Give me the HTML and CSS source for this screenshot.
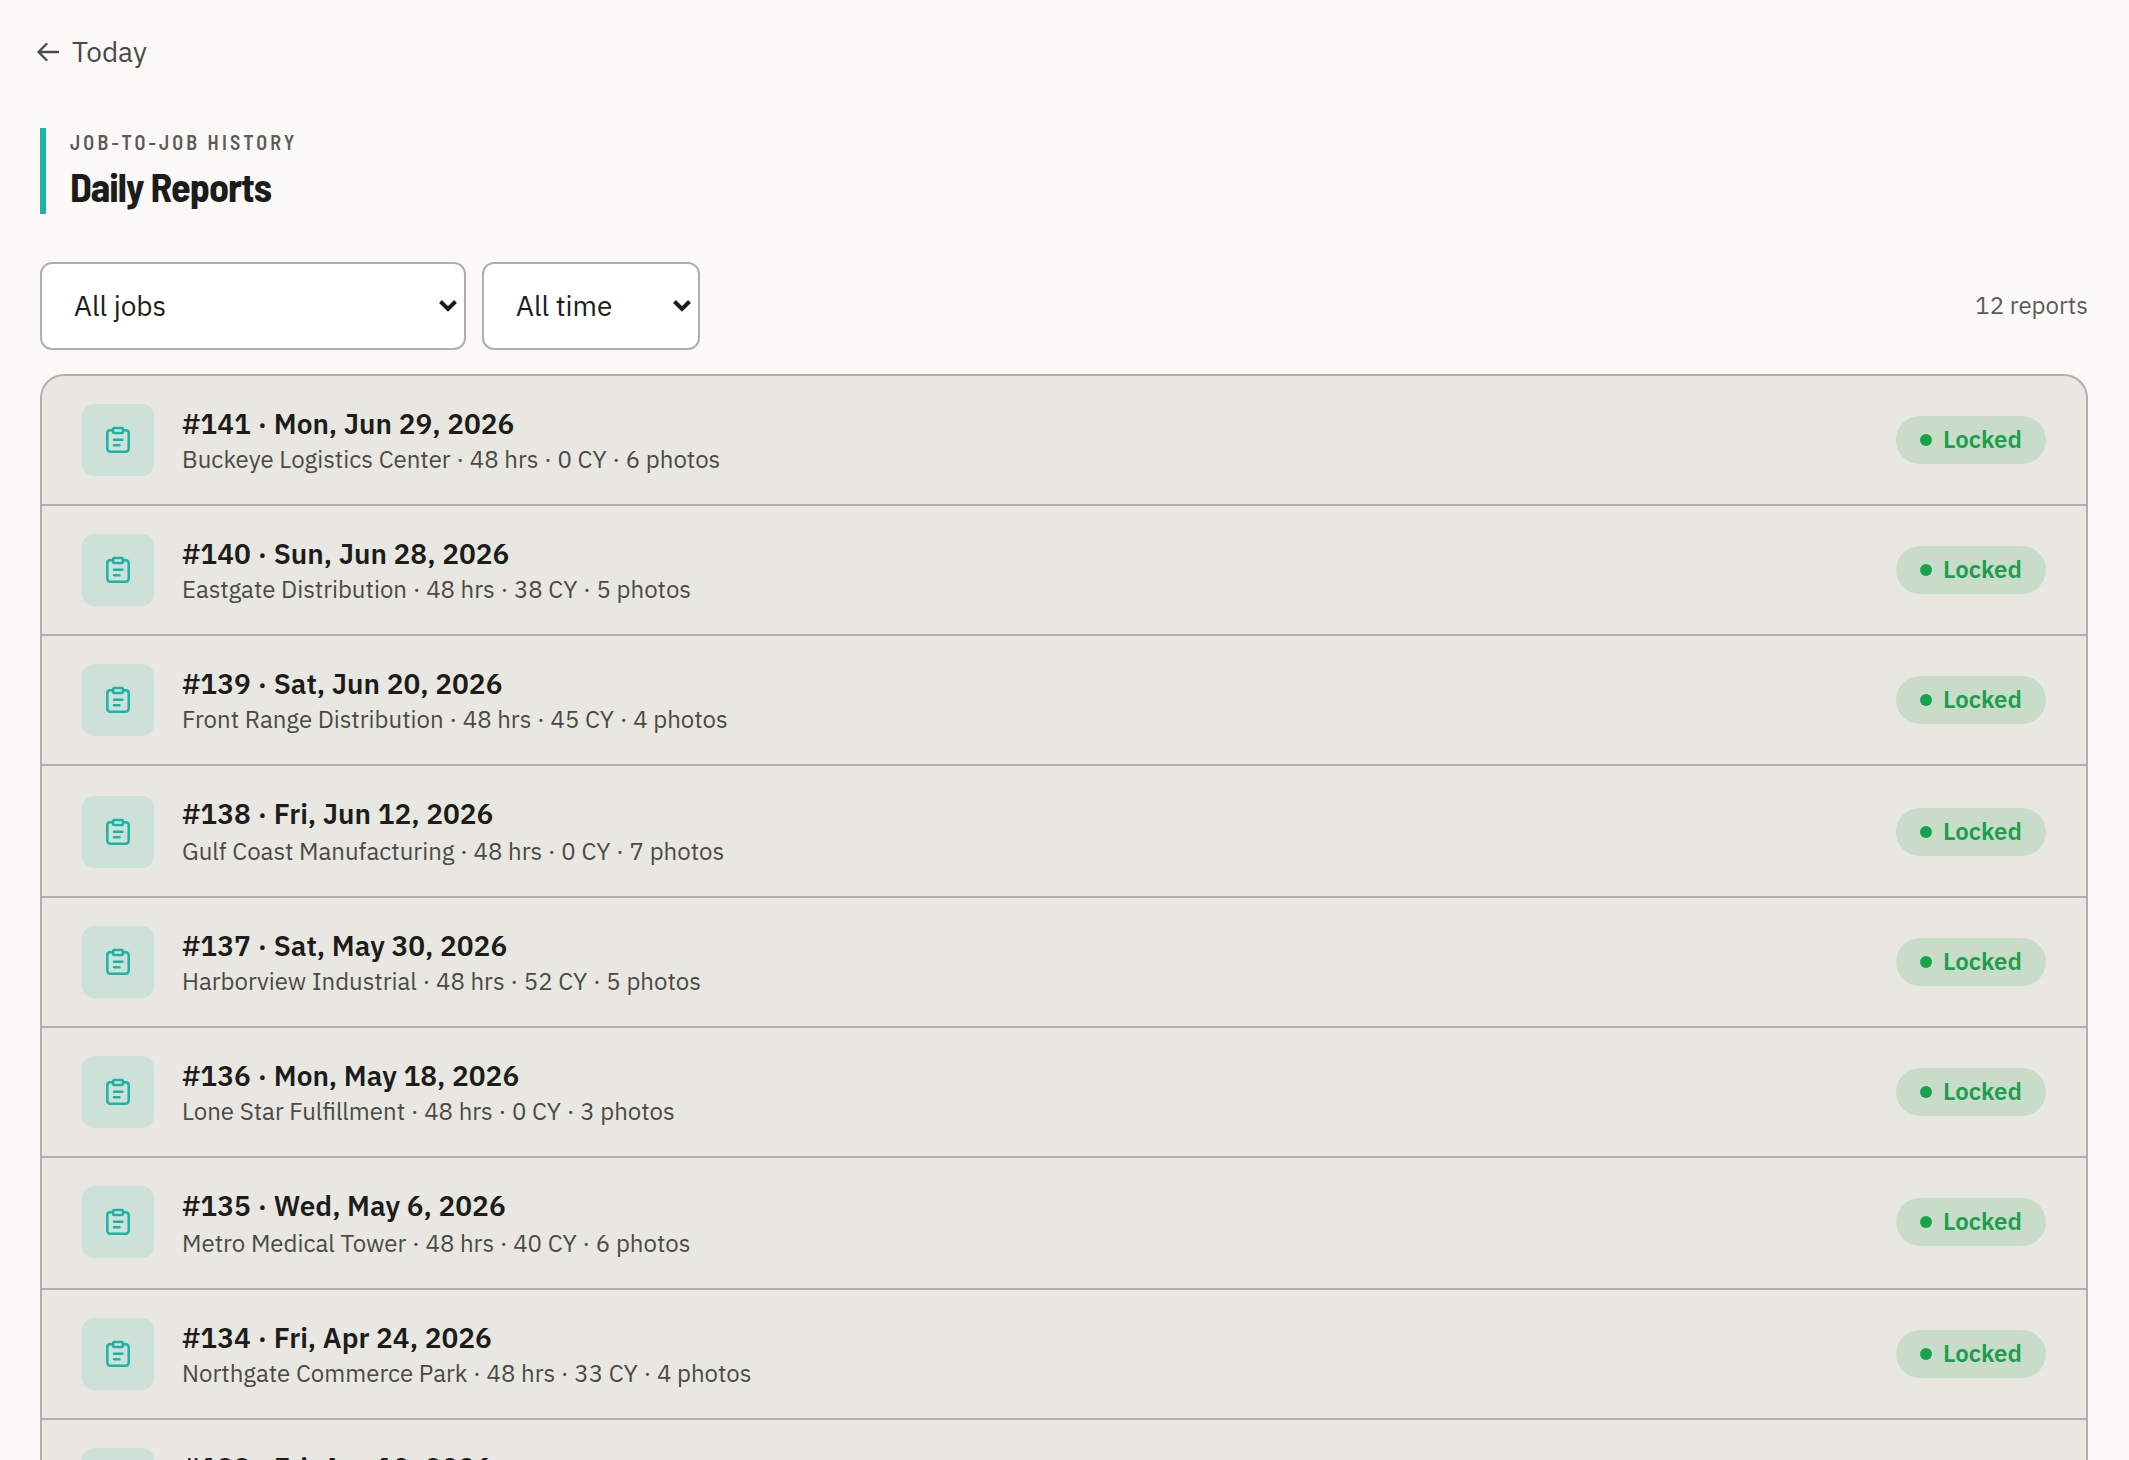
FILE: index.html
```html
<!DOCTYPE html>
<html lang="en">
<head>
<meta charset="utf-8">
<title>Daily Reports</title>
<link rel="stylesheet" href="styles.css">
</head>
<body>
<svg class="sprite" aria-hidden="true">
  <symbol id="clip" viewBox="0 0 28 28"><g fill="none" stroke="currentColor" stroke-width="2.5" stroke-linecap="round" stroke-linejoin="round"><path d="M9 4.2H6.200A2.900 2.900 0 0 0 3.300 7v15.800A2.900 2.900 0 0 0 6.200 25.700h15.600a2.900 2.900 0 0 0 2.900-2.900V7A2.900 2.900 0 0 0 21.800 4.200H19"/><rect x="9" y="1.900" width="10" height="5" rx="1.500"/><path d="M10 13.800h8.500M10 19.300h5.500"/></g></symbol>
</svg>
<a class="back"><svg viewBox="0 0 28 28"><path d="M24 14H4.500M12.500 6 4.500 14l8 8" fill="none" stroke="currentColor" stroke-width="2.400" stroke-linecap="round" stroke-linejoin="round"/></svg><span>Today</span></a>
<header class="heading"><p class="eyebrow">JOB-TO-JOB HISTORY</p><h1>Daily Reports</h1></header>
<div class="filters">
  <div class="select jobs"><span>All jobs</span><svg viewBox="0 0 18 12"><path d="M1.500 1.500 9 9l7.500-7.500"/></svg></div>
  <div class="select time"><span>All time</span><svg viewBox="0 0 18 12"><path d="M1.500 1.500 9 9l7.500-7.500"/></svg></div>
  <span class="count">12 reports</span>
</div>
<main class="list" id="list"></main>
<script src="script.js"></script>
</body>
</html>
```
FILE: styles.css
```css
* { box-sizing: border-box; }
html { overflow: hidden; }
body { display: flex; flex-direction: column; margin: 0; height: 1460px; overflow: hidden; background: #faf9f7; color: #1c1c1a; font-family: "IBM Plex Sans", Roboto, "Noto Sans", sans-serif; font-size: 28px; }
.sprite { display: none; }
.back { display: flex; flex: none; align-items: center; gap: 10px; height: 40px; margin: 32px 0 0 34px; color: #4a4a46; }
.back svg { width: 28px; height: 28px; }
.back span { padding-bottom: 1px; }
.select span, .count { padding-bottom: 2px; }
.heading { flex: none; margin: 56px 0 0 40px; height: 86px; border-left: 6px solid #1ab3a4; padding-left: 24px; }
.heading p, .heading h1 { margin: 0; white-space: nowrap; font-family: "Barlow Semi Condensed", "Barlow Condensed", sans-serif; }
.heading p { font-size: 20px; line-height: 28px; letter-spacing: 0.16em; color: #5c5c57; font-weight: 600; }
.heading h1 { font-size: 40px; line-height: 46px; padding-top: 7px; font-weight: 700; letter-spacing: -0.025em; }
.filters { display: flex; flex: none; align-items: center; gap: 16px; margin: 48px 41px 0 40px; }
.select { display: flex; align-items: center; justify-content: space-between; height: 88px; border: 2px solid #b0afab; border-radius: 12px; background: #fff; padding: 0 7px 0 32px; }
.select svg { width: 18px; height: 12px; fill: none; stroke: #1c1c1a; stroke-width: 4; }
.jobs { width: 426px; }
.time { width: 218px; }
.count { margin-left: auto; font-size: 24px; color: #5c5c57; }
.list { flex: 1; min-height: 0; margin: 24px 41px 0 40px; border: 2px solid #b0afab; border-bottom: 0; border-radius: 24px 24px 0 0; background: #e8e7e2; overflow: hidden; }
.row { display: flex; align-items: flex-start; height: 130px; padding: 28px 40px 0; border-bottom: 2px solid #b0afab; }
.row:nth-child(3n+4) { height: 132px; }
.row:nth-child(3n+4) .meta { padding-top: 2px; }
.row:nth-child(4) .tile { margin-top: 2px; }
.row:nth-child(4) .badge { margin-top: 4px; }
.tile { display: flex; align-items: center; justify-content: center; width: 72px; height: 72px; margin-right: 28px; border-radius: 12px; background: #cde1d9; color: #1ab3a4; }
.tile svg { width: 28px; height: 28px; }
.title { font-weight: 600; line-height: 39px; }
.meta { font-size: 24px; line-height: 33px; color: #4a4a46; }
.badge-slot { display: flex; align-items: center; height: 72px; margin-left: auto; }
.badge { display: flex; align-items: center; gap: 11px; width: 150px; height: 48px; padding: 0 24px; border-radius: 24px; background: #c8dcc9; color: #1b9f4c; font-size: 24px; font-weight: 600; }
.badge span { padding-bottom: 2px; }
.badge i { flex: none; width: 12px; height: 12px; border-radius: 50%; background: #16a34a; }
```
FILE: script.js
```js
const reports = [
  ["#141 · Mon, Jun 29, 2026", "Buckeye Logistics Center · 48 hrs · 0 CY · 6 photos"],
  ["#140 · Sun, Jun 28, 2026", "Eastgate Distribution · 48 hrs · 38 CY · 5 photos"],
  ["#139 · Sat, Jun 20, 2026", "Front Range Distribution · 48 hrs · 45 CY · 4 photos"],
  ["#138 · Fri, Jun 12, 2026", "Gulf Coast Manufacturing · 48 hrs · 0 CY · 7 photos"],
  ["#137 · Sat, May 30, 2026", "Harborview Industrial · 48 hrs · 52 CY · 5 photos"],
  ["#136 · Mon, May 18, 2026", "Lone Star Fulfillment · 48 hrs · 0 CY · 3 photos"],
  ["#135 · Wed, May 6, 2026", "Metro Medical Tower · 48 hrs · 40 CY · 6 photos"],
  ["#134 · Fri, Apr 24, 2026", "Northgate Commerce Park · 48 hrs · 33 CY · 4 photos"],
  ["#133 · Fri, Apr 10, 2026", ""]
];
document.getElementById("list").innerHTML = reports.map(([title, meta]) => `
  <article class="row">
    <div class="tile"><svg><use href="#clip"/></svg></div>
    <div class="text"><div class="title">${title}</div>${meta ? `<div class="meta">${meta}</div>` : ""}</div>
    ${meta ? `<div class="badge-slot"><div class="badge"><i></i><span>Locked</span></div></div>` : ""}
  </article>`).join("");
```
